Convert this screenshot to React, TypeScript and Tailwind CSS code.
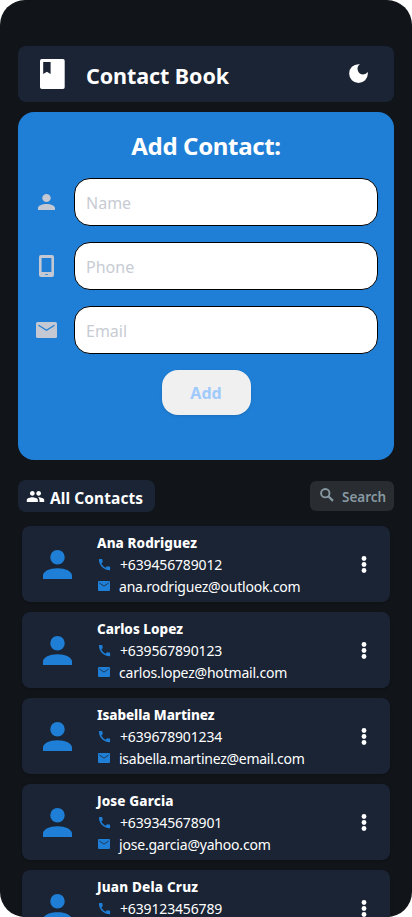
import React from 'react';
import { MdCall, MdDarkMode, MdPeople } from 'react-icons/md';

type Contact = { name: string; phone: string; email?: string; nameTrack: string; mailTrack: string };

const contacts: Contact[] = [
  { name: 'Ana Rodriguez', phone: '+639456789012', email: 'ana.rodriguez@outlook.com', nameTrack: 'tracking-[0.08px]', mailTrack: 'tracking-[-0.2px]' },
  { name: 'Carlos Lopez', phone: '+639567890123', email: 'carlos.lopez@hotmail.com', nameTrack: 'tracking-[0.02px]', mailTrack: 'tracking-[-0.2px]' },
  { name: 'Isabella Martinez', phone: '+639678901234', email: 'isabella.martinez@email.com', nameTrack: 'tracking-[-0.08px]', mailTrack: 'tracking-[-0.26px]' },
  { name: 'Jose Garcia', phone: '+639345678901', email: 'jose.garcia@yahoo.com', nameTrack: 'tracking-[0.12px]', mailTrack: 'tracking-[-0.2px]' },
  { name: 'Juan Dela Cruz', phone: '+639123456789', nameTrack: 'tracking-[0.18px]', mailTrack: 'tracking-[-0.2px]' },
];

function PersonIcon({ className }: { className: string }) {
  return (
    <svg viewBox="4 4 16 16" preserveAspectRatio="none" className={className} fill="currentColor">
      <path d="M12 4a4 4 0 1 1 0 8a4 4 0 0 1 0-8M12 14c4.42 0 8 1.79 8 4v2H4v-2c0-2.21 3.58-4 8-4Z" />
    </svg>
  );
}

function MailIcon({ className, line }: { className: string; line: string }) {
  return (
    <svg viewBox="0 0 21 16" preserveAspectRatio="none" className={className}>
      <rect width="21" height="16" rx="1.5" fill="currentColor" />
      <path d="M2.5 3.2L10.5 8.2L18.5 3.2" fill="none" stroke={line} strokeWidth="1.3" />
    </svg>
  );
}

function PhoneIcon() {
  return (
    <svg viewBox="0 0 15 22" className="h-[22px] w-[15px]" fill="currentColor" fillRule="evenodd">
      <path d="M2 0h11a2 2 0 0 1 2 2v18a2 2 0 0 1-2 2H2a2 2 0 0 1-2-2V2a2 2 0 0 1 2-2ZM2.6 3v14h9.8V3ZM6 18.9v.9h3v-.9Z" />
    </svg>
  );
}

function SearchIcon() {
  return (
    <svg viewBox="0 0 14 14" className="mb-[2px] h-[14px] w-[14px]" fill="none" stroke="currentColor">
      <circle cx="5.3" cy="5.2" r="4.2" strokeWidth="1.9" />
      <path d="M8.3 8.2L13 12.9" strokeWidth="2.2" />
    </svg>
  );
}

function BookIcon() {
  return (
    <svg viewBox="0 0 25 30" className="h-[30px] w-[25px]" fill="#fff" fillRule="evenodd">
      <path d="M1.8 0h21.2a1.7 1.7 0 0 1 1.7 1.7v26.6a1.7 1.7 0 0 1-1.7 1.7H1.8A1.8 1.8 0 0 1 0 28.3V1.7A1.8 1.8 0 0 1 1.8 0ZM3.2 3v12L6.9 12.7L10.6 15V3Z" />
    </svg>
  );
}

function Dots() {
  return (
    <svg viewBox="0 0 6 17" className="mr-[23px] h-[17px] w-[6px]" fill="#fff">
      <circle cx="3" cy="2.5" r="2.4" />
      <circle cx="3" cy="8.5" r="2.4" />
      <circle cx="3" cy="14.5" r="2.4" />
    </svg>
  );
}

function Field({ label, icon }: { label: string; icon: React.ReactNode }) {
  return (
    <div className="flex h-12 items-center">
      <div className="flex w-14 justify-center text-[#c4c8d2]">{icon}</div>
      <input
        placeholder={label}
        className="mr-4 h-12 min-w-0 flex-1 rounded-[16px] border border-black bg-white px-[11px] pt-[1px] text-[16px] outline-none placeholder:text-[#c7cbd3]"
      />
    </div>
  );
}

function Card({ c }: { c: Contact }) {
  return (
    <div className="flex h-[76px] shrink-0 items-center rounded-[8px] bg-[#1a2435] shadow-sm">
      <div className="flex w-[75px] justify-center pr-[4px]">
        <PersonIcon className="h-[29px] w-[29px] text-[#1f7fd6]" />
      </div>
      <div className="flex-1 whitespace-nowrap pt-[2px] text-[14px] leading-[22px] text-white">
        <div className={`h-[22px] text-[13.5px] font-extrabold ${c.nameTrack}`}>{c.name}</div>
        <div className="flex h-[22px] items-center">
          <div className="w-[23px]"><MdCall className="mb-[1px] h-[15px] w-[15px] text-[#1f7fd6]" /></div>
          <span className="tracking-[-0.15px]">{c.phone}</span>
        </div>
        <div className="flex h-[22px] items-center">
          {c.email && (
            <>
              <div className="w-[22px]"><MailIcon className="mb-[2px] ml-[1px] h-[10px] w-[12px] text-[#1f7fd6]" line="#1a2435" /></div>
              <span className={c.mailTrack}>{c.email}</span>
            </>
          )}
        </div>
      </div>
      <Dots />
    </div>
  );
}

export default function App() {
  return (
    <div className="h-[917px] w-[412px] overflow-hidden bg-white font-['Noto_Sans',sans-serif]">
      <div className="flex h-full flex-col overflow-hidden rounded-[25px] bg-[#111418] px-[18px] pt-[46px]">
        <header className="flex h-14 shrink-0 items-center rounded-[8px] bg-[#1a2435] pl-[22px] pr-[23px]">
          <BookIcon />
          <h1 className="ml-[21px] flex-1 pt-[4px] text-[21.5px] font-bold tracking-[-0.08px] text-white">Contact Book</h1>
          <MdDarkMode className="mb-px h-[25px] w-[25px] text-white" />
        </header>

        <section className="mt-[10px] flex h-[348px] shrink-0 flex-col rounded-[16px] bg-[#1f7fd6]">
          <h2 className="mt-[18px] h-[32px] text-center text-[24px] font-bold leading-[32px] tracking-[-0.35px] text-white">Add Contact:</h2>
          <div className="mt-4 flex flex-col gap-4">
            <Field label="Name" icon={<PersonIcon className="h-[16px] w-[17px]" />} />
            <Field label="Phone" icon={<PhoneIcon />} />
            <Field label="Email" icon={<MailIcon className="h-4 w-[21px]" line="#1f7fd6" />} />
          </div>
          <button className="mt-4 h-[45px] w-[89px] self-center rounded-[16px] bg-[#f0f0f0] pt-[1px] text-[16px] font-bold text-[#a0cafc] shadow-sm">Add</button>
        </section>

        <div className="mt-5 flex h-8 shrink-0 items-center justify-between">
          <div className="flex h-8 w-[137px] items-center whitespace-nowrap rounded-[8px] bg-[#1a2435] pl-[8px] text-white">
            <MdPeople className="h-[19px] w-[19px]" />
            <span className="ml-[5px] pt-[5px] text-[15.5px] font-bold tracking-[0.08px]">All Contacts</span>
          </div>
          <div className="flex h-[30px] w-[84px] items-center rounded-[6px] bg-[#292c30] pl-[10px] text-[#8799a3]">
            <SearchIcon />
            <span className="ml-[8px] pt-[2px] text-[13.5px] font-semibold">Search</span>
          </div>
        </div>

        <div className="mx-1 mt-[14px] flex flex-col gap-[10px]">
          {contacts.map((c) => <Card key={c.name} c={c} />)}
        </div>
      </div>
    </div>
  );
}
